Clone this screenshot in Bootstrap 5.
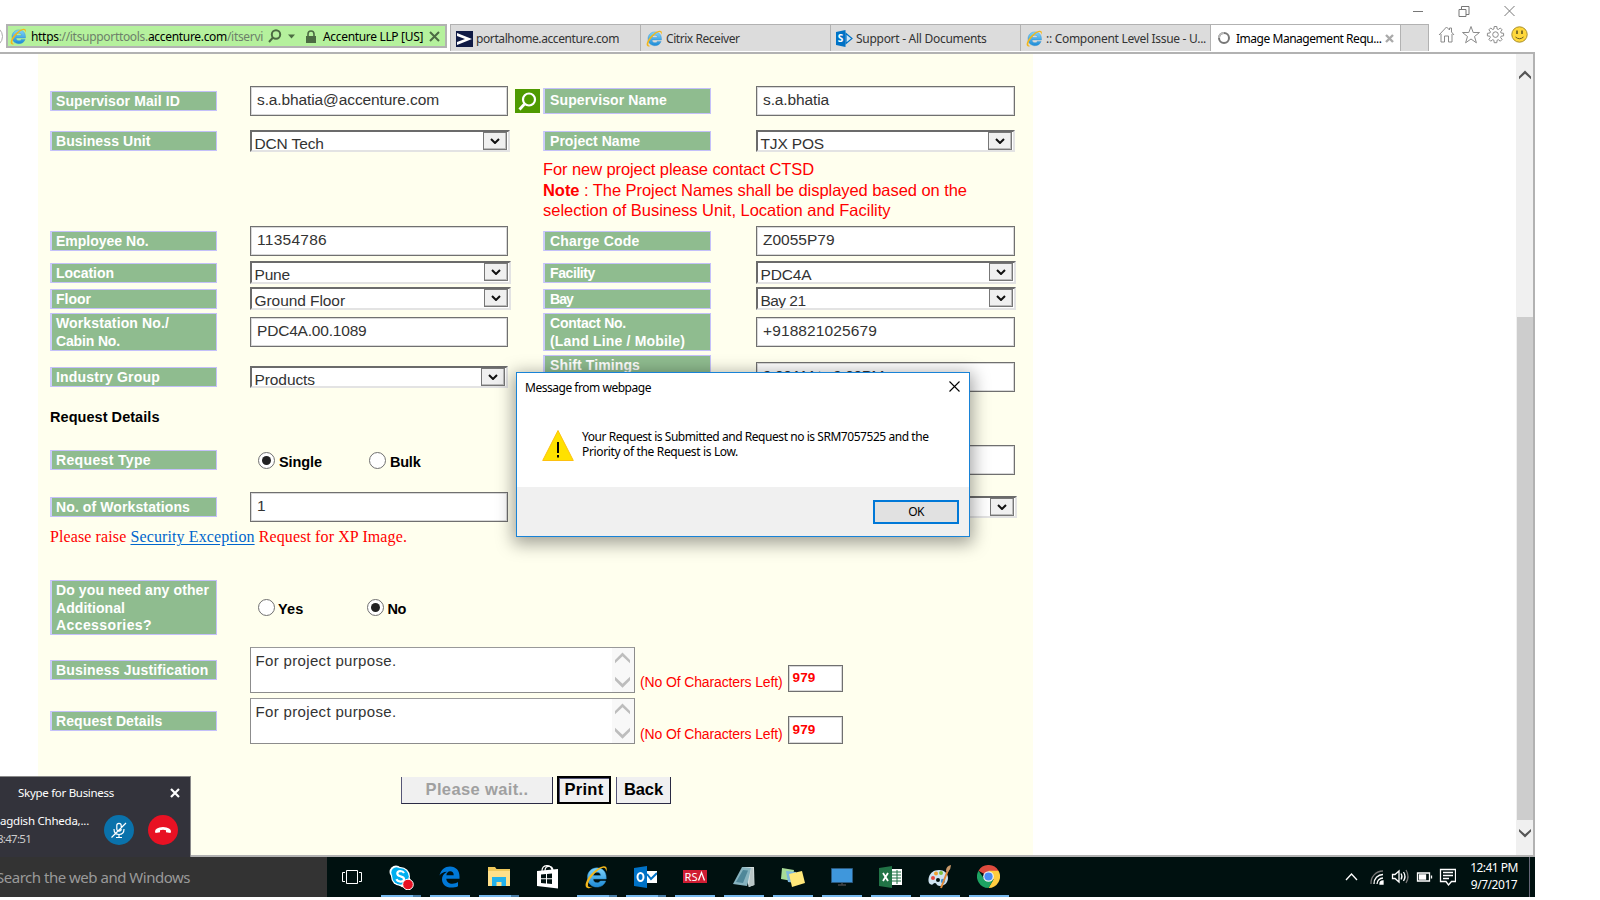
<!DOCTYPE html>
<html lang="en">
<head>
<meta charset="utf-8">
<title>Image Management Request</title>
<link href="https://cdn.jsdelivr.net/npm/bootstrap@5.3.0/dist/css/bootstrap.min.css" rel="stylesheet">
<style>
body{background:#fff;overflow:hidden;font-family:"Liberation Sans",Arial,sans-serif;color:#000;line-height:1}
svg{display:block;flex:none}
[data-w]{white-space:pre;display:inline-block}
.seg{font-family:"Noto Sans","Open Sans",sans-serif}
.desk{width:1535px;height:897px;position:relative;overflow:hidden}
/* browser chrome */
.winbtns{height:24px;padding:0 19px 2px 0}
.tabrow{height:28px}
.addr{width:441px;height:24px;margin-left:6px;background:#b5f19d;border:2px solid #b2b2b2;font-size:12px;padding-left:2px;position:relative}
.navdot{position:absolute;left:-26px;top:0;width:21px;height:21px;border:1px solid #aaa;border-radius:50%}
.tabs{margin-left:3px;height:27px;width:979px;background:#dcdcdc;border:1px solid #b2b2b2;border-bottom:0;font-size:12px;color:#333}
.tab1{width:190px;border-right:1px solid #b2b2b2;padding-left:5px;gap:3px;padding-top:1px}
.tab1.on{background:#fff;color:#000}
.pane{height:805px;border-top:2px solid #b2b2b2;border-bottom:2px solid #b2b2b2;border-right:2px solid #b2b2b2}
.sheet{margin-left:38px;width:995px;background:#ffffee;padding:32px 0 0 12px}
.sbar{width:17px;background:#f0f0f0;margin-left:483px;padding:16px 0 17px 1px}
.thumb{height:504px;width:16px;background:#cdcdcd}
/* form */
.frow{display:grid;grid-template-columns:200px 293px 213px 262px;align-items:center}
.lab{width:167px;min-height:20px;background:#8fbc8f;border:1px solid #c4c0fa;border-left:2px solid #ccccfa;color:#fff;font-weight:700;font-size:14px;line-height:17px;padding:1px 0 0 4px}
.lab.w2{width:168px;padding-left:5px}
.inp{height:30px;width:259px;background:#fff;border:1px solid #707070;box-shadow:inset -1px -1px #d8d8d8,inset 1px 1px #d8d8d8;font-size:15.5px;color:#333;padding:5px 0 0 6px;line-height:16px}
.inp.l{width:258px}
.sel{height:22.5px;width:261px;background:#fff;border:solid;border-width:2.5px 2px 2px 2.5px;border-color:#6b6b6b #e3e3e3 #e3e3e3 #6b6b6b;font-size:15.5px;color:#333;overflow:hidden;padding:0 1px 0 2.5px;line-height:24px}
.sel .dd{width:24px;height:18px;background:#f0f0f0;border:1px solid #777;box-shadow:inset -1px -1px #bbb;align-self:flex-start}
.r38{height:38px;line-height:17.5px}.r30{height:30px}.r23{height:23px}
.red{color:#f00}
.note1{margin-left:493px;font-size:16.5px;line-height:20.5px}
.rad{width:17px;height:17px;border:1.5px solid #707070;border-radius:50%;background:#fff;display:flex;align-items:center;justify-content:center}
.rad.on::after{content:"";width:9px;height:9px;border-radius:50%;background:#222}
.blk{font-weight:700;font-size:14.5px}
.ser{font-family:"Liberation Serif","Times New Roman",serif;font-size:16px}
.ser a,.ser a:hover{color:#06c;text-decoration:underline;text-underline-offset:2px}
.area{width:385px;height:46px;background:#fff;border:1.5px solid #8c8c8c;border-top-color:#999;font-size:15px;color:#333}
.area .up{width:22px;background:#f8f8f8}
.cnt{width:55px;height:27px;background:#fff;border:1px solid #707070;box-shadow:inset -1px -1px #d8d8d8,inset 1px 1px #d8d8d8;font-weight:700;font-size:13.5px;padding:5px 0 0 4px}
.fbtn{height:27px;background:#f0f0f0;border:solid #2b2b44;border-width:0 1.5px 1.5px 1px;border-left-color:#557;font-weight:700;font-size:16.5px;display:flex;align-items:center;justify-content:center;padding-bottom:2px}
/* dialog */
.dlg{position:absolute;left:516px;top:372px;width:454px;height:165px;background:#fff;border:1px solid #1883d7;box-shadow:0 4px 16px 3px rgba(0,0,0,.36);font-size:12px}
.dlgfoot{height:49px;background:#f0f0f0;padding-right:10px}
.okb{width:86px;height:24px;border:2px solid #0078d7;background:#e1e1e1}
/* call toast */
.toast2{position:absolute;left:0;top:776px;width:191px;height:81px;background:#33333b;border:1px solid #8a8a8a;border-left:0;border-bottom:0;color:#fff;font-size:11.5px;overflow:hidden}
.rnd{width:30px;height:30px;border-radius:50%}
/* taskbar */
.task{height:40px;background:#001110}
.srch{width:327px;background:#333;color:#9a9a9a;font-size:15px;padding:1px 0 0 0}
.ti{width:40px;margin-right:9px;height:40px;border-bottom:2px solid transparent;display:flex;justify-content:center;align-items:center;padding:1px 1px 0 0}
.ti.run{border-bottom-color:#76b9ed}
.ti.grp{border-image:linear-gradient(90deg,#76b9ed 78%,#4a7fa8 78%) 2;border-style:solid;border-width:0 0 2px}
</style>
</head>
<body>
<svg width="0" height="0" class="position-absolute">
<defs>
<linearGradient id="gb" x1="0" y1="0" x2="0" y2="1"><stop offset="0" stop-color="#7fd4fb"/><stop offset="1" stop-color="#1c8ad6"/></linearGradient>
<symbol id="ie" viewBox="1 0.5 18 18.5"><path d="M10.300 2.600c-4.300 0-7.400 3.200-7.400 7.500s3.100 7.500 7.400 7.500c3.300 0 5.900-1.700 6.900-4.700H13c-.5.9-1.300 1.400-2.500 1.400-1.900 0-3.100-1.200-3.100-3h10.200v-1.100c0-4.600-2.900-7.600-7.300-7.600zM7.500 8.600c.2-1.600 1.200-2.500 2.900-2.500s2.700.9 2.900 2.500z" fill="url(#gb)" stroke="#2d8fce" stroke-width=".4"/><path d="M17.600 5.700C18.500 3.200 18.100 1 15.400 1.300 10.500 1.900 3.300 8.600 1.700 14.400 1 17 1.700 19.200 4.800 18.300c1-.3 1.700-.7 2.500-1.200-1.900.9-3.800.9-4-.7C3 13 8.300 5.800 13.500 3.100c2.600-1.300 4.100-.2 4.100 2.600z" fill="#f3b71b"/></symbol>
<symbol id="dn" viewBox="0 0 10 6"><path d="M1 1l4 4 4-4" fill="none" stroke="#111" stroke-width="2"/></symbol>
<symbol id="cu" viewBox="0 0 16 12"><path d="M0 11.500V8L8 0l8 8v3.500L8 4.200z"/></symbol>
</defs>
</svg>
<div class="desk">
 <header>
  <div class="winbtns d-flex justify-content-end align-items-center">
   <svg width="104" height="14" viewBox="0 0 104 14" fill="none" stroke="#777" stroke-width="1"><path d="M1 7.500h10M47 5.500h7v7h-7zM49.500 5V2.500h7.500v8h-3M92.500 2l10 10M102.500 2l-10 10"/></svg>
  </div>
  <div class="tabrow d-flex seg">
   <div class="addr d-flex align-items-center">
    <span class="navdot"></span>
    <svg width="17" height="17"><use href="#ie"/></svg>
    <span data-w="232" style="margin-left:4px;color:#6d806a;padding-top:1px"><span class="text-black">https</span>://itsupporttools.<span class="text-black">accenture.com</span>/itservi</span>
    <svg class="ms-1" width="30" height="14" viewBox="0 0 30 14" fill="none" stroke="#4c6b43" stroke-width="2"><circle cx="9" cy="5.500" r="4.200"/><path d="M6 8.500L2 13"/><path d="M21 5.500h7l-3.500 4z" fill="#4c6b43" stroke="none"/></svg>
    <svg style="margin-left:8px" width="12" height="13" viewBox="0 0 12 13"><path d="M1 6h10v7H1z" fill="#4c6b43"/><path d="M3 6V4a3 3 0 0 1 6 0v2" fill="none" stroke="#4c6b43" stroke-width="1.600"/></svg>
    <span data-w="100" style="margin-left:6px;padding-top:1px">Accenture LLP [US]</span>
    <svg style="margin-left:6px" width="11" height="11" viewBox="0 0 11 11"><path d="M1 1l9 9M10 1L1 10" stroke="#4c6b43" stroke-width="2"/></svg>
   </div>
   <div class="tabs d-flex">
    <div class="tab1 d-flex align-items-center"><svg width="17" height="16" viewBox="0 0 17 16"><path d="M0 0h17v16H0z" fill="#101b45"/><path d="M1 2l15 6L1 14v-3l8-3-8-3z" fill="#fff"/></svg><span data-w="143">portalhome.accenture.com</span></div>
    <div class="tab1 d-flex align-items-center"><svg width="17" height="17"><use href="#ie"/></svg><span data-w="73.6">Citrix Receiver</span></div>
    <div class="tab1 d-flex align-items-center"><svg width="17" height="17" viewBox="0 0 17 17"><path d="M10 3.500l6 5-6 5z" fill="#cfe6f7" stroke="#0072c6" stroke-width="1.200"/><path d="M0 2l9.500-2v17L0 15z" fill="#0072c6"/><text x="1.800" y="12.300" font-size="10" font-weight="700" fill="#fff">S</text></svg><span data-w="130.6">Support - All Documents</span></div>
    <div class="tab1 d-flex align-items-center"><svg width="17" height="17"><use href="#ie"/></svg><span data-w="160">:: Component Level Issue - U...</span></div>
    <div class="tab1 on d-flex align-items-center"><svg width="17" height="17" viewBox="0 0 17 17"><circle cx="8" cy="8" r="5" fill="none" stroke="#777" stroke-width="2"/><path d="M8 3A5 5 0 0 0 3 8" fill="none" stroke="#bbb" stroke-width="2"/></svg><span data-w="145.5">Image Management Requ...</span><svg width="9" height="9" viewBox="0 0 9 9"><path d="M1 1l7 7M8 1L1 8" stroke="#aaa" stroke-width="2.400"/></svg></div>
   </div>
   <svg style="margin:1px 0 0 9px" width="92" height="20" viewBox="0 0 92 20" fill="none" stroke="#8a8a8a"><path d="M1 10L8.500 2l3 3V3h2v4L16 10M3 9v8h3.500v-6h4v6H14V9"/><path d="M33 1.500l2.200 6h6.300l-5 4 1.900 6.300-5.400-3.800-5.400 3.800 1.900-6.300-5-4h6.300z"/><path d="M55.900 4l.3-2.500h2.600l.3 2.500 1.200.5 2-1.500 1.800 1.800-1.500 2 .5 1.200 2.500.3v2.600l-2.500.3-.5 1.200 1.500 2-1.800 1.800-2-1.500-1.200.5-.3 2.500h-2.600l-.3-2.500-1.200-.5-2 1.500-1.800-1.800 1.500-2-.5-1.200-2.500-.3V8.300l2.500-.3.5-1.200-1.500-2 1.800-1.800 2 1.500z"/><circle cx="57.500" cy="9.600" r="2.800"/><circle cx="81.500" cy="9.500" r="7.700" fill="#ffd83b" stroke="#a98f2c"/><path d="M79 5.500v3.500M84 5.500v3.500" stroke="#665a20" stroke-width="1.600"/><path d="M77.500 12q4 3.500 8 0" stroke="#665a20"/></svg>
  </div>
 </header>

 <main class="pane d-flex">
  <div class="sheet">
   <div class="frow r30">
    <div class="lab"><span data-w="124">Supervisor Mail ID</span></div>
    <div class="d-flex align-items-center" style="gap:7px"><div class="inp l"><span data-w="182">s.a.bhatia@accenture.com</span></div>
     <svg width="25" height="24" viewBox="0 0 25 24"><path d="M0 0h25v24H0z" fill="#4f9a00"/><circle cx="14" cy="10.500" r="6" fill="none" stroke="#fff" stroke-width="2.200"/><path d="M9.500 15L4.500 20.500" stroke="#fff" stroke-width="2.800"/></svg></div>
    <div class="lab w2" style="height:26px;padding-top:2.500px"><span data-w="117">Supervisor Name</span></div>
    <div class="inp"><span data-w="66">s.a.bhatia</span></div>
   </div>
   <div class="frow r23" style="margin-top:13.500px">
    <div class="lab"><span data-w="94.6">Business Unit</span></div>
    <div class="sel d-flex justify-content-between" style="width:260px"><span data-w="69.3">DCN Tech</span><span class="dd d-flex align-items-center justify-content-center"><svg width="10" height="6"><use href="#dn"/></svg></span></div>
    <div class="lab w2"><span data-w="90">Project Name</span></div>
    <div class="sel d-flex justify-content-between" style="width:259px"><span data-w="63.5">TJX POS</span><span class="dd d-flex align-items-center justify-content-center"><svg width="10" height="6"><use href="#dn"/></svg></span></div>
   </div>
   <div class="note1 red" style="margin-top:6.500px;height:67px">
    <div><span data-w="271">For new project please contact CTSD</span></div>
    <div><span data-w="424"><b>Note</b> : The Project Names shall be displayed based on the</span></div>
    <div style="margin-top:-.5px"><span data-w="347.5">selection of Business Unit, Location and Facility</span></div>
   </div>
   <div class="frow r30">
    <div class="lab"><span data-w="92.6">Employee No.</span></div><div class="inp l"><span data-w="70">11354786</span></div>
    <div class="lab w2"><span data-w="89.6">Charge Code</span></div><div class="inp"><span data-w="71.6">Z0055P79</span></div>
   </div>
   <div class="frow r23" style="margin-top:5px">
    <div class="lab"><span data-w="58">Location</span></div>
    <div class="sel d-flex justify-content-between"><span data-w="35.5">Pune</span><span class="dd d-flex align-items-center justify-content-center"><svg width="10" height="6"><use href="#dn"/></svg></span></div>
    <div class="lab w2"><span data-w="45">Facility</span></div>
    <div class="sel d-flex justify-content-between" style="width:260px"><span data-w="51">PDC4A</span><span class="dd d-flex align-items-center justify-content-center"><svg width="10" height="6"><use href="#dn"/></svg></span></div>
   </div>
   <div class="frow r23" style="margin-top:3px">
    <div class="lab"><span data-w="35">Floor</span></div>
    <div class="sel d-flex justify-content-between"><span data-w="90.5">Ground Floor</span><span class="dd d-flex align-items-center justify-content-center"><svg width="10" height="6"><use href="#dn"/></svg></span></div>
    <div class="lab w2"><span data-w="23">Bay</span></div>
    <div class="sel d-flex justify-content-between" style="width:260px"><span data-w="45">Bay 21</span><span class="dd d-flex align-items-center justify-content-center"><svg width="10" height="6"><use href="#dn"/></svg></span></div>
   </div>
   <div class="frow r38" style="margin-top:3px">
    <div class="lab r38"><span data-w="113">Workstation No./</span><br><span data-w="64">Cabin No.</span></div><div class="inp l"><span data-w="109.5">PDC4A.00.1089</span></div>
    <div class="lab w2 r38"><span data-w="76">Contact No.</span><br><span data-w="135">(Land Line / Mobile)</span></div><div class="inp"><span data-w="114">+918821025679</span></div>
   </div>
   <div class="frow" style="margin-top:4px;height:44px">
    <div class="lab"><span data-w="104">Industry Group</span></div>
    <div class="sel d-flex justify-content-between" style="width:258px"><span data-w="60.5">Products</span><span class="dd d-flex align-items-center justify-content-center"><svg width="10" height="6"><use href="#dn"/></svg></span></div>
    <div class="lab w2" style="height:44px"><span data-w="90">Shift Timings</span></div><div class="inp"><span data-w="121">9:00AM to 9:00PM</span></div>
   </div>
   <div class="blk" style="margin-top:11px;height:35px"><span data-w="109.5">Request Details</span></div>
   <div class="frow r30">
    <div class="lab"><span data-w="95">Request Type</span></div>
    <div class="d-flex align-items-center blk" style="padding-left:8px"><span class="rad on"></span><span data-w="43" style="margin:4px 47px 0 4px">Single</span><span class="rad"></span><span data-w="30.5" style="margin:4px 0 0 4px">Bulk</span></div>
    <div></div><div class="inp"></div>
   </div>
   <div class="frow r30" style="margin-top:17px">
    <div class="lab"><span data-w="134">No. of Workstations</span></div><div class="inp l">1</div>
    <div></div>
    <div class="sel d-flex justify-content-end"><span class="dd d-flex align-items-center justify-content-center"><svg width="10" height="6"><use href="#dn"/></svg></span></div>
   </div>
   <div class="ser red" style="margin-top:6px;height:52px;line-height:18px"><span data-w="357">Please raise <a href="#">Security Exception</a> Request for XP Image.</span></div>
   <div class="frow" style="height:55px">
    <div class="lab" style="height:55px;line-height:17.500px"><span data-w="153">Do you need any other</span><br><span data-w="69">Additional</span><br><span data-w="96">Accessories?</span></div>
    <div class="d-flex align-items-center blk" style="padding-left:8px"><span class="rad"></span><span data-w="25.5" style="margin:4px 63px 0 3px">Yes</span><span class="rad on"></span><span data-w="18.5" style="margin:4px 0 0 4px">No</span></div>
   </div>
   <div class="d-flex" style="margin-top:12px;height:46px">
    <div style="width:199.500px;padding-top:13px"><div class="lab"><span data-w="152.5">Business Justification</span></div></div>
    <div class="area d-flex justify-content-between"><span data-w="141" style="padding:5px 0 0 5px">For project purpose.</span><span class="up d-flex flex-column justify-content-between align-items-center py-1"><svg width="15" height="12" fill="#bdbdbd"><use href="#cu"/></svg><svg width="15" height="12" fill="#bdbdbd" style="transform:scaleY(-1)"><use href="#cu"/></svg></span></div>
    <div class="d-flex red" style="padding:18px 0 0 5.500px;gap:5px"><span data-w="142.5" style="font-size:14px;padding-top:10px">(No Of Characters Left)</span><div class="cnt"><span data-w="23">979</span></div></div>
   </div>
   <div class="d-flex" style="margin-top:5px;height:46px">
    <div style="width:199.500px;padding-top:13px"><div class="lab"><span data-w="106.5">Request Details</span></div></div>
    <div class="area d-flex justify-content-between"><span data-w="141" style="padding:5px 0 0 5px">For project purpose.</span><span class="up d-flex flex-column justify-content-between align-items-center py-1"><svg width="15" height="12" fill="#bdbdbd"><use href="#cu"/></svg><svg width="15" height="12" fill="#bdbdbd" style="transform:scaleY(-1)"><use href="#cu"/></svg></span></div>
    <div class="d-flex red" style="padding:18px 0 0 5.500px;gap:5px"><span data-w="142.5" style="font-size:14px;padding-top:11px">(No Of Characters Left)</span><div class="cnt" style="height:28px;padding-top:6px"><span data-w="23">979</span></div></div>
   </div>
   <div class="d-flex align-items-end" style="margin:32px 0 0 351px;height:28px">
    <div class="fbtn" style="width:152px;color:#a0a0a0"><span data-w="103">Please wait..</span></div>
    <div class="fbtn" style="width:54px;height:28px;margin:0 5px 0 4px;border:2px solid #000;box-shadow:inset 1px 1px #557"><span data-w="39">Print</span></div>
    <div class="fbtn" style="width:55px"><span data-w="39">Back</span></div>
   </div>
  </div>
  <div class="sbar d-flex flex-column">
   <svg width="12" height="10" fill="#555" style="margin-left:2px"><use href="#cu"/></svg>
   <div class="thumb" style="margin-top:237px"></div>
   <svg width="12" height="10" fill="#555" style="margin:8px 0 0 2px;transform:scaleY(-1)"><use href="#cu"/></svg>
  </div>
 </main>

 <footer class="task d-flex seg">
  <div class="srch d-flex align-items-center"><span data-w="194" style="margin-left:-4px">Search the web and Windows</span></div>
  <div class="d-flex" style="margin-left:5px">
   <div class="ti"><svg width="20" height="14" viewBox="0 0 20 14" fill="none" stroke="#fff"><path d="M4.500.5h11v13h-11zM3 2.500H.5v9H3M17 2.500h2.500v9H17"/></svg></div>
   <div class="ti grp"><svg width="26" height="26" viewBox="0 0 26 26"><circle cx="8" cy="8" r="6.500" fill="#fff"/><circle cx="16" cy="17" r="6.500" fill="#fff"/><circle cx="12.500" cy="12.500" r="9.500" fill="#fff"/><circle cx="12.500" cy="12.500" r="8.300" fill="#00aff0"/><circle cx="8.500" cy="8.500" r="5.200" fill="#00aff0"/><path d="M16 9q-1-2-3.700-2-3 .2-3 2.500 0 2 3.200 2.800 3.700.8 3.500 3-.3 2.300-3.500 2.300-3.200-.2-4-2.400" fill="none" stroke="#fff" stroke-width="2.200"/><circle cx="20" cy="20.500" r="5.300" fill="#e81123" stroke="#fff"/></svg></div>
   <div class="ti run"><svg width="21" height="22" viewBox="0 0 21 22"><path d="M.5 9.500C2 3.500 6 .5 11 .5c6 0 9.700 4.300 9.500 10v2.200H7.300c.3 3.300 2.700 5 6 5 2.200 0 4-.6 5.700-1.700v4.200c-2 1-4.300 1.400-6.700 1.400-5.800 0-9.300-3.400-9.300-8.300 0-3.300 1.700-6 5-7.600C4 5.900 2 7.300.5 9.500zM7.400 9.200h7.300c0-2.500-1.300-3.900-3.500-3.900S7.600 7 7.400 9.200z" fill="#0078d7"/></svg></div>
   <div class="ti grp"><svg width="22" height="19" viewBox="0 0 22 19"><path d="M0 0h7l1.500 2H22v17H0z" fill="#f0c95c"/><path d="M0 4h22v15H0z" fill="#ffe08a"/><path d="M4 19v-9h14v9h-4.500v-4h-5v4z" fill="#22b2ec"/></svg></div>
   <div class="ti"><svg width="22" height="24" viewBox="0 0 22 24"><path d="M0 6l21-2v19.500L0 21z" fill="#fff"/><path d="M5 6c0-7 9-7 10-1M8 6c0-6 7-6 8-1" fill="none" stroke="#fff" stroke-width="1.200"/><path d="M4 9.500l5-.4v4.200H4zM10 9l5-.5v4.800h-5zM4 14.200h5v4.200l-5-.4zM10 14.200h5V19l-5-.5z" fill="#001110"/></svg></div>
   <div class="ti grp"><svg width="23" height="24"><use href="#ie"/></svg></div>
   <div class="ti grp"><svg width="23" height="22" viewBox="0 0 23 22"><path d="M11 5h12v12H11z" fill="#fff"/><path d="M13 8l4 5 6-6" fill="none" stroke="#0072c6" stroke-width="2"/><path d="M0 2l13-2v22L0 20z" fill="#0072c6"/><ellipse cx="6.500" cy="11" rx="3" ry="4" fill="none" stroke="#fff" stroke-width="2"/></svg></div>
   <div class="ti run"><svg width="24" height="13" viewBox="0 0 24 13"><path d="M0 0h24v13H0z" fill="#d01d33"/><text x="1.500" y="10.500" font-size="11" textLength="13" lengthAdjust="spacingAndGlyphs" fill="#fff">RS</text><path d="M15.500 10.500l3-8 3 8" fill="none" stroke="#fff" stroke-width="1.300"/></svg></div>
   <div class="ti run"><svg width="22" height="22" viewBox="0 0 22 22"><path d="M9 1h12l.5 18-5.500 2z" fill="#d5dfdf"/><path d="M9 1l9 1-4 18-14-2z" fill="#86b3bf"/><path d="M10 4l5 .5L10 17l-7-1z" fill="#4f8799"/><path d="M18 2l2 0 1 17-5.500 2z" fill="#b9c6c6"/></svg></div>
   <div class="ti run"><svg width="24" height="20" viewBox="0 0 24 20"><path d="M1 1l12 2-2 11-11-2z" fill="#a8db98"/><path d="M5 4l10 1v11l-8-1z" fill="#7db8de"/><path d="M8 7l13-3 3 12-13 4z" fill="#ffe87a"/></svg></div>
   <div class="ti run"><svg width="22" height="18" viewBox="0 0 22 18"><path d="M.5.500h21v14H.5z" fill="#3f97dc" stroke="#2b5a80"/><path d="M7 17h8M11 15v2" stroke="#444" stroke-width="1.500"/></svg></div>
   <div class="ti run"><svg width="23" height="22" viewBox="0 0 23 22"><path d="M12 3h11v16H12z" fill="#fff"/><path d="M13 6h9M13 9h9M13 12h9M13 15h9M18 4v14" stroke="#217346"/><path d="M0 2l13-2v22L0 20z" fill="#217346"/><path d="M4 7l5 8M9 7l-5 8" stroke="#fff" stroke-width="1.800"/></svg></div>
   <div class="ti run"><svg width="25" height="24" viewBox="0 0 25 24"><path d="M12 5c5 0 9 3 9 8s-4 8-8 8-3-3-5-3-2 3-5 1-2-14 9-14z" fill="#cfe4f2"/><circle cx="6" cy="13" r="2" fill="#e8483f"/><circle cx="9" cy="8.500" r="2" fill="#f0a030"/><circle cx="14" cy="8" r="2" fill="#7cc142"/><circle cx="11" cy="15" r="2" fill="#001110"/><circle cx="16" cy="16" r="2.200" fill="#3b8fd6"/><path d="M21 5L14 23" stroke="#e08a3a" stroke-width="2"/><path d="M19 6q0-5 5-6 0 4-3 7z" fill="#c8996a"/></svg></div>
   <div class="ti run"><svg width="23" height="23" viewBox="0 0 24 24"><path d="M12 12L1.600 6A12 12 0 0 1 22.400 6z" fill="#dd4b3e"/><path d="M22.400 6A12 12 0 0 1 12 24l5.200-9L12 6z" fill="#ffcd40"/><path d="M1.600 6A12 12 0 0 0 12 24l5.200-9H8z" fill="#1da362"/><circle cx="12" cy="12" r="5.600" fill="#f1f1f1"/><circle cx="12" cy="12" r="4.300" fill="#4a8af4"/></svg></div>
  </div>
  <svg style="margin:9px 0 0 326px" width="112" height="22" viewBox="0 0 112 22" fill="none" stroke="#fff" stroke-width="1.300"><path d="M2 14l5.500-6 5.500 6"/><path d="M27 18a12 12 0 0 1 12-13" stroke="#777"/><path d="M30 18a9 9 0 0 1 9-9.500M33 18a6 6 0 0 1 6-6"/><path d="M36 18a3 3 0 0 1 3-3v3z" fill="#fff"/><path d="M48.500 8.500h2.500l4-3.500v11l-4-3.500h-2.500zM57 7.500q2 3 0 6M59.500 6q3 4.500 0 9"/><path d="M62 4q4 6.500 0 13" stroke="#777"/><path d="M73.500 7h12v8h-12zM87.500 9.500v3"/><path d="M75.500 9h6v4h-6z" fill="#fff"/><path d="M96.500 3.500h15v12h-4l-3 3.500-2.500-3.500h-5.500zM99 6.500h10M99 9.500h10M99 12.500h6"/></svg>
  <div class="text-white d-flex flex-column justify-content-center align-items-center" style="margin-left:9px;width:58px;font-size:12px;line-height:17px;padding-bottom:2px"><span data-w="47.5">12:41 PM</span><span data-w="46.5">9/7/2017</span></div>
  <div style="width:1px;background:#667;margin-left:6px"></div>
 </footer>

 <div class="dlg seg d-flex flex-column">
  <div class="d-flex justify-content-between" style="padding:8px 9px 0 8px;height:56px"><span data-w="126" style="line-height:13px">Message from webpage</span><svg width="11" height="11" viewBox="0 0 11 11"><path d="M.5.500l10 10M10.500.500l-10 10" stroke="#000" stroke-width="1.100"/></svg></div>
  <div class="d-flex flex-grow-1" style="padding-left:25px"><svg width="32" height="33" viewBox="0 0 32 33"><path d="M16 1.500L31.300 31.500H.7z" fill="#ffe100" stroke="#fdc010"/><path d="M16 13v11M16 26v2.500" stroke="#000" stroke-width="2"/></svg>
   <div style="margin:0 0 0 8px;line-height:15px"><span data-w="346.5">Your Request is Submitted and Request no is SRM7057525 and the</span><br><span data-w="156">Priority of the Request is Low.</span></div></div>
  <div class="dlgfoot d-flex align-items-center justify-content-end"><div class="okb d-flex align-items-center justify-content-center"><span data-w="15.5">OK</span></div></div>
 </div>

 <div class="toast2 seg">
  <div class="d-flex justify-content-between align-items-center" style="padding:9px 10px 0 18px;height:22px"><span data-w="96">Skype for Business</span><svg width="10" height="10" viewBox="0 0 10 10"><path d="M1 1l8 8M9 1L1 9" stroke="#fff" stroke-width="2.200"/></svg></div>
  <div class="d-flex" style="margin-top:16px">
   <div style="width:104px;line-height:18px"><div style="margin-top:-3px"><span data-w="89">agdish Chheda,...</span></div><div style="margin-left:-3px;color:#ccc"><span data-w="34">8:47:51</span></div></div>
   <div class="rnd" style="background:#0a72ab"><svg width="30" height="30" viewBox="0 0 30 30" fill="none" stroke="#fff" stroke-width="1.200"><path d="M12.800 14v-3.500a2.200 2.200 0 0 1 4.400 0V14a2.200 2.200 0 0 1-4.400 0zM10 14q0 5.500 5 5.500t5-5.500M15 19.500v3M12 22.500h6M7.500 22.500L22 8"/></svg></div>
   <div class="rnd" style="background:#e81123;margin-left:14px"><svg width="30" height="30" viewBox="0 0 30 30"><path d="M7 16.500q0-4 8-4.500 8 .5 8 4.500l-.5 1.500-4.500-.8v-2q-3-1-6 0v2L7.500 18z" fill="#fff"/></svg></div>
  </div>
 </div>
</div>
<script src="https://cdn.jsdelivr.net/npm/bootstrap@5.3.0/dist/js/bootstrap.bundle.min.js"></script>
<script>
/* Track every caption so that it fills its nominal width. */
document.querySelectorAll('[data-w]').forEach(function (el) {
  var r = document.createRange();
  r.selectNodeContents(el);
  var n = el.textContent.length;
  el.style.letterSpacing = ((parseFloat(el.dataset.w) - r.getBoundingClientRect().width) / n).toFixed(3) + 'px';
});
</script>
</body>
</html>
